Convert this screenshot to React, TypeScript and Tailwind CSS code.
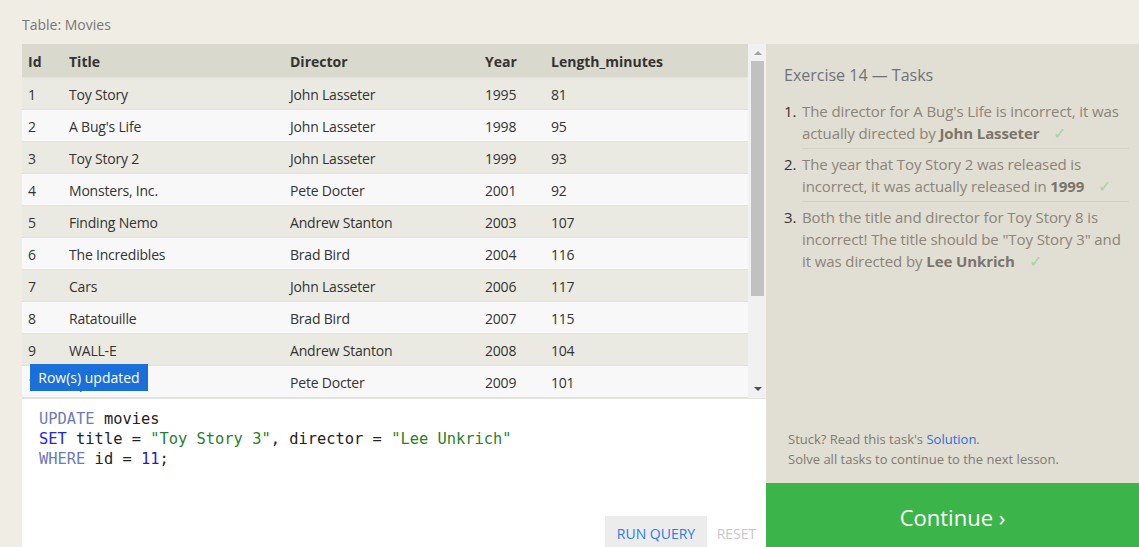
import React from "react";

const rows: [number, string, string, number, number][] = [
  [1, "Toy Story", "John Lasseter", 1995, 81],
  [2, "A Bug's Life", "John Lasseter", 1998, 95],
  [3, "Toy Story 2", "John Lasseter", 1999, 93],
  [4, "Monsters, Inc.", "Pete Docter", 2001, 92],
  [5, "Finding Nemo", "Andrew Stanton", 2003, 107],
  [6, "The Incredibles", "Brad Bird", 2004, 116],
  [7, "Cars", "John Lasseter", 2006, 117],
  [8, "Ratatouille", "Brad Bird", 2007, 115],
  [9, "WALL-E", "Andrew Stanton", 2008, 104],
  [10, "Up", "Pete Docter", 2009, 101],
];

function Check() {
  return <span className="ml-[14px] text-[16px] text-[#a3d6a0]">✓</span>;
}

export default function App() {
  return (
    <div
      className="flex h-[547px] w-[1139px] flex-col overflow-hidden bg-[#f0ede5]"
      style={{ fontFamily: '"Open Sans", "Noto Sans", sans-serif' }}
    >
      {/* caption */}
      <div className="h-[44px] pl-[22px] pt-[15px] text-[14px] leading-[20px] text-[#777]">
        Table: Movies
      </div>

      <div className="flex flex-1 pl-[22px]">
        {/* Left: table + editor */}
        <div className="flex w-[744px] flex-col">
          <div className="relative flex h-[354px]">
            <div className="flex-1 text-[14px] text-[#333]">
              <div className="flex h-[34px] items-center border-b border-[#e3e3dd] bg-[#dad9ce] pt-[1px] font-bold text-[#333]">
                <div className="w-[41px] pl-[6px]">Id</div>
                <div className="w-[221px] pl-[6px]">Title</div>
                <div className="w-[195px] pl-[6px]">Director</div>
                <div className="w-[66px] pl-[6px]">Year</div>
                <div className="pl-[6px]">Length_minutes</div>
              </div>
              {rows.map((r, i) => (
                <div
                  key={r[0]}
                  className={
                    "flex h-[32px] items-center border-b border-[#e2e2dc] pt-[1px] tracking-[-0.2px] " +
                    (i % 2 === 0 ? "bg-[#eaeae3]" : "bg-[#f8f8f8]")
                  }
                >
                  <div className="w-[41px] pl-[6px]">{r[0]}</div>
                  <div className="w-[221px] pl-[6px]">{r[1]}</div>
                  <div className="w-[195px] pl-[6px]">{r[2]}</div>
                  <div className="w-[66px] pl-[6px]">{r[3]}</div>
                  <div className="pl-[6px]">{r[4]}</div>
                </div>
              ))}
            </div>
            {/* scrollbar */}
            <div className="relative w-[18px] bg-[#f1f1f1]">
              <div className="absolute left-[6px] top-[7px] h-0 w-0 border-x-[4px] border-b-[4px] border-x-transparent border-b-[#a3a3a3]" />
              <div className="absolute left-[3px] top-[17px] h-[235px] w-[13px] bg-[#c1c1c1]" />
              <div className="absolute left-[6px] top-[343px] h-0 w-0 border-x-[4px] border-t-[4px] border-x-transparent border-t-[#505050]" />
            </div>
            {/* toast */}
            <div className="absolute left-[8px] top-[320px] flex h-[27px] w-[118px] items-center justify-center bg-[#1b6fd8] text-[14px] text-white">
              Row(s) updated
            </div>
          </div>

          {/* editor */}
          <div className="flex flex-1 flex-col border-t border-[#e3e3dd] bg-white">
            <pre
              className="flex-1 pl-[17px] pt-[10px] text-[15.4px] leading-[20px] text-[#222]"
              style={{ fontFamily: '"DejaVu Sans Mono", "Liberation Mono", monospace' }}
            >
              <span className="text-[#6b7cb8]">UPDATE</span> movies{"\n"}
              <span className="text-[#2222ee]">SET</span> title = <span className="text-[#2a7d2a]">"Toy Story 3"</span>, director = <span className="text-[#2a7d2a]">"Lee Unkrich"</span>{"\n"}
              <span className="text-[#6b7cb8]">WHERE</span> id = <span className="text-[#2a1ac0]">11</span>;
            </pre>
            <div className="flex h-[31px] justify-end">
              <div className="flex h-full w-[102px] items-center justify-center bg-[#ececec] pt-[3px] text-[14px] text-[#2f7de1]">
                RUN QUERY
              </div>
              <div className="flex h-full w-[59px] items-center justify-center pt-[3px] text-[14px] text-[#c8c8c8]">
                RESET
              </div>
            </div>
          </div>
        </div>

        {/* Right: tasks */}
        <div className="flex flex-1 flex-col bg-[#e1ded3]">
          <div className="flex-1 pl-[18px] pr-[10px] pt-[20px]">
            <div className="text-[16px] leading-[22px] text-[#6e727c]">Exercise 14 — Tasks</div>
            <ol className="mt-[14px] text-[15px] leading-[22px] tracking-[-0.1px] text-[#8c8479]">
              <li className="flex pb-[4px]">
                <span className="w-[18px] shrink-0 text-[#333]">1.</span>
                <span className="flex-1 border-b border-[#d3d0c6] pb-[4px]">
                  The director for A Bug's Life is incorrect, it was actually directed by{" "}
                  <b className="text-[#7b756b]">John Lasseter</b>
                  <Check />
                </span>
              </li>
              <li className="flex pb-[4px]">
                <span className="w-[18px] shrink-0 text-[#333]">2.</span>
                <span className="flex-1 border-b border-[#d3d0c6] pb-[4px]">
                  The year that Toy Story 2 was released is incorrect, it was actually released in{" "}
                  <b className="text-[#7b756b]">1999</b>
                  <Check />
                </span>
              </li>
              <li className="flex">
                <span className="w-[18px] shrink-0 text-[#333]">3.</span>
                <span className="flex-1">
                  Both the title and director for Toy Story 8 is incorrect! The title should be "Toy Story 3" and it was directed by{" "}
                  <b className="text-[#7b756b]">Lee Unkrich</b>
                  <Check />
                </span>
              </li>
            </ol>
          </div>
          <div className="px-[22px] pb-[14px] text-[13px] leading-[20px] text-[#7d7a72]">
            <div>
              Stuck? Read this task's <span className="text-[#2c6fdc]">Solution</span>.
            </div>
            <div>Solve all tasks to continue to the next lesson.</div>
          </div>
          <div className="flex h-[64px] items-center justify-center bg-[#3bb54a] pt-[4px] text-[22px] text-white">
            Continue ›
          </div>
        </div>
      </div>
    </div>
  );
}
